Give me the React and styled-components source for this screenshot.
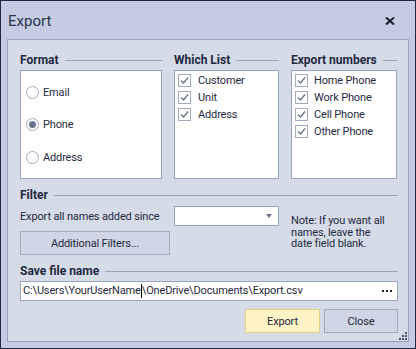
import styled, { createGlobalStyle } from "styled-components";

const Global = createGlobalStyle`
  html, body {
    margin: 0;
    padding: 0;
    background: #c5cbe0;
  }
  * {
    box-sizing: border-box;
  }
`;

const Window = styled.div`
  position: relative;
  width: 416px;
  height: 349px;
  border: 1px solid #1c2b3e;
  background: #c5cbe0;
  font-family: Roboto, "Liberation Sans", sans-serif;
  font-size: 11px;
  letter-spacing: -0.15px;
  line-height: 13px;
  color: #1f2940;
  display: flex;
  flex-direction: column;
`;

const TitleBar = styled.div`
  flex-shrink: 0;
  height: 38px;
  display: flex;
  align-items: center;
  justify-content: space-between;
  padding: 2px 20px 0 7px;
`;

const Title = styled.div`
  font-size: 15px;
  letter-spacing: 0;
  line-height: 18px;
  color: #2a3450;
`;

const CloseX = styled.svg`
  width: 10px;
  height: 8px;
`;

const Panel = styled.div`
  position: relative;
  flex: 1;
  min-height: 0;
  margin: 0 6px 6px 6px;
  background: #d6dbe8;
  border: 1px solid #9aa3b8;
  padding: 12px 10px 9px 12px;
  display: flex;
  flex-direction: column;
`;

const Columns = styled.div`
  display: grid;
  grid-template-columns: 142px 105px 106px;
  column-gap: 12px;
`;

const Group = styled.div`
  display: flex;
  flex-direction: column;
  gap: 2px;
  margin-top: ${(p) => p.$top || 0}px;
`;

const GroupLabel = styled.div`
  display: flex;
  align-items: center;
  height: 16px;
  font-size: 12px;
  font-weight: bold;
  letter-spacing: 0;
  white-space: nowrap;
  &::after {
    content: "";
    flex: 1;
    height: 1px;
    margin-left: 6px;
    background: #9aa3b8;
  }
`;

const ListBox = styled.div`
  height: 109px;
  background: #fff;
  border: 1px solid #9aa3b8;
  display: flex;
  flex-direction: column;
  justify-content: ${(p) => (p.$center ? "center" : "flex-start")};
  gap: ${(p) => (p.$center ? "16.5px" : "0")};
  padding: ${(p) => (p.$center ? "0 0 0 5px" : "1px 0 0 3px")};
`;

const Option = styled.div`
  display: flex;
  align-items: center;
  height: ${(p) => (p.$tall ? 16 : 17)}px;
  gap: ${(p) => p.$gap || 4}px;
  white-space: nowrap;
`;

const Radio = styled.span`
  width: 13px;
  height: 13px;
  border-radius: 50%;
  border: 1px solid #a3aabd;
  background: #fff;
  display: flex;
  align-items: center;
  justify-content: center;
  &::after {
    content: "";
    width: 7px;
    height: 7px;
    border-radius: 50%;
    background: ${(p) => (p.$checked ? "#6b7491" : "transparent")};
  }
`;

const Box = styled.span`
  width: 13px;
  height: 13px;
  border: 1px solid #a3aabd;
  background: #fff;
  display: flex;
  align-items: center;
  justify-content: center;
`;

const FilterBody = styled.div`
  display: flex;
  margin-top: 1px;
`;

const FilterLeft = styled.div`
  width: 154px;
  display: flex;
  flex-direction: column;
  gap: 5px;
`;

const RowText = styled.div`
  height: 20px;
  display: flex;
  align-items: center;
  white-space: nowrap;
`;

const Button = styled.button`
  width: ${(p) => p.$w}px;
  height: 24px;
  font: inherit;
  letter-spacing: inherit;
  color: #1f2940;
  background: ${(p) => (p.$primary ? "#fdf3c4" : "#d0d6e5")};
  border: 1px solid ${(p) => (p.$primary ? "#e4cf8c" : "#a3aabd")};
  padding: 0;
`;

const Dropdown = styled.div`
  width: 105px;
  height: 20px;
  background: #fff;
  border: 1px solid #9aa3b8;
  display: flex;
  align-items: center;
  justify-content: flex-end;
  padding-right: 6px;
  margin-right: 12px;
  &::after {
    content: "";
    border-left: 3.5px solid transparent;
    border-right: 3.5px solid transparent;
    border-top: 4px solid #6b7491;
  }
`;

const Note = styled.div`
  margin-top: 9px;
  line-height: 11.5px;
  white-space: nowrap;
`;

const PathInput = styled.div`
  height: 20px;
  background: #fff;
  border: 1px solid #9aa3b8;
  display: flex;
  align-items: center;
  justify-content: space-between;
  padding: 0 5px 0 2px;
  white-space: nowrap;
`;

const Caret = styled.span`
  display: inline-block;
  width: 1px;
  height: 14px;
  background: #000;
  vertical-align: middle;
`;

const Ellipsis = styled.svg`
  width: 10px;
  height: 2px;
`;

const Actions = styled.div`
  display: flex;
  justify-content: flex-end;
  gap: 4px;
  margin-top: 8px;
`;

const Grip = styled.svg`
  position: absolute;
  right: 1px;
  bottom: 1px;
  width: 8px;
  height: 8px;
`;

const Check = () => (
  <svg width="11" height="11" viewBox="0 0 11 11">
    <path d="M2 5.5 L4.5 8 L9 2.5" fill="none" stroke="#6b7491" strokeWidth="1.4" />
  </svg>
);

const CheckList = ({ items, gap }) => (
  <ListBox>
    {items.map((t) => (
      <Option key={t} $gap={gap}>
        <Box>
          <Check />
        </Box>
        {t}
      </Option>
    ))}
  </ListBox>
);

export default function App() {
  return (
    <>
      <Global />
      <Window>
        <TitleBar>
          <Title>Export</Title>
          <CloseX viewBox="0 0 10 8">
            <path d="M1 0.5 L9 7.5 M9 0.5 L1 7.5" stroke="#1a1f2e" strokeWidth="2" />
          </CloseX>
        </TitleBar>
        <Panel>
          <Columns>
            <Group>
              <GroupLabel>Format</GroupLabel>
              <ListBox $center>
                <Option $tall>
                  <Radio />
                  Email
                </Option>
                <Option $tall>
                  <Radio $checked />
                  Phone
                </Option>
                <Option $tall>
                  <Radio />
                  Address
                </Option>
              </ListBox>
            </Group>
            <Group>
              <GroupLabel>Which List</GroupLabel>
              <CheckList items={["Customer", "Unit", "Address"]} gap={7} />
            </Group>
            <Group>
              <GroupLabel>Export numbers</GroupLabel>
              <CheckList
                items={["Home Phone", "Work Phone", "Cell Phone", "Other Phone"]}
                gap={6}
              />
            </Group>
          </Columns>

          <Group $top={8}>
            <GroupLabel>Filter</GroupLabel>
            <FilterBody>
              <FilterLeft>
                <RowText>Export all names added since</RowText>
                <Button $w={150}>Additional Filters...</Button>
              </FilterLeft>
              <Dropdown />
              <Note>
                Note: If you want all
                <br />
                names, leave the
                <br />
                date field blank.
              </Note>
            </FilterBody>
          </Group>

          <Group $top={8}>
            <GroupLabel>Save file name</GroupLabel>
            <PathInput>
              <span>
                C:\Users\YourUserName<Caret />\OneDrive\Documents\Export.csv
              </span>
              <Ellipsis viewBox="0 0 10 2">
                <rect x="0" y="0" width="2" height="2" fill="#1a1f2e" />
                <rect x="4" y="0" width="2" height="2" fill="#1a1f2e" />
                <rect x="8" y="0" width="2" height="2" fill="#1a1f2e" />
              </Ellipsis>
            </PathInput>
          </Group>

          <Actions>
            <Button $w={75} $primary>
              Export
            </Button>
            <Button $w={74}>Close</Button>
          </Actions>

          <Grip viewBox="0 0 8 8">
            {[
              [6, 0],
              [6, 3],
              [3, 3],
              [6, 6],
              [3, 6],
              [0, 6],
            ].map(([x, y]) => (
              <rect key={`${x}-${y}`} x={x} y={y} width="2" height="2" fill="#4a5570" />
            ))}
          </Grip>
        </Panel>
      </Window>
    </>
  );
}
